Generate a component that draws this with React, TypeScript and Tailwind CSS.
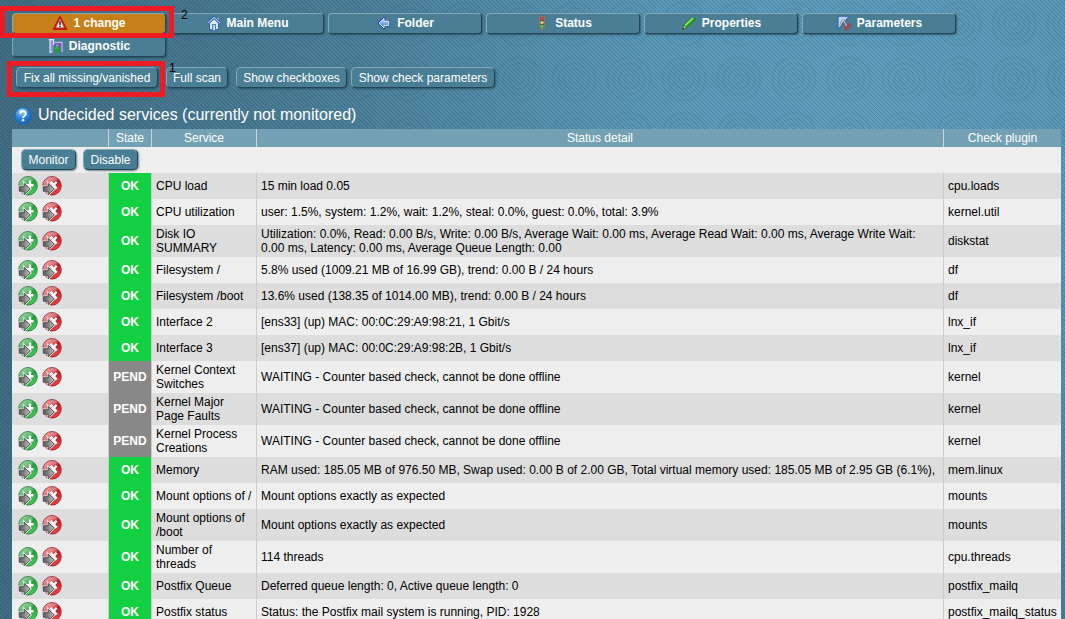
import React from "react";

type Row = { state: "OK" | "PEND"; service: string[]; detail: string[]; plugin: string };

const wait = "WAITING - Counter based check, cannot be done offline";

const rows: Row[] = [
  { state: "OK", service: ["CPU load"], detail: ["15 min load 0.05"], plugin: "cpu.loads" },
  { state: "OK", service: ["CPU utilization"], detail: ["user: 1.5%, system: 1.2%, wait: 1.2%, steal: 0.0%, guest: 0.0%, total: 3.9%"], plugin: "kernel.util" },
  {
    state: "OK",
    service: ["Disk IO", "SUMMARY"],
    detail: [
      "Utilization: 0.0%, Read: 0.00 B/s, Write: 0.00 B/s, Average Wait: 0.00 ms, Average Read Wait: 0.00 ms, Average Write Wait:",
      "0.00 ms, Latency: 0.00 ms, Average Queue Length: 0.00",
    ],
    plugin: "diskstat",
  },
  { state: "OK", service: ["Filesystem /"], detail: ["5.8% used (1009.21 MB of 16.99 GB), trend: 0.00 B / 24 hours"], plugin: "df" },
  { state: "OK", service: ["Filesystem /boot"], detail: ["13.6% used (138.35 of 1014.00 MB), trend: 0.00 B / 24 hours"], plugin: "df" },
  { state: "OK", service: ["Interface 2"], detail: ["[ens33] (up) MAC: 00:0C:29:A9:98:21, 1 Gbit/s"], plugin: "lnx_if" },
  { state: "OK", service: ["Interface 3"], detail: ["[ens37] (up) MAC: 00:0C:29:A9:98:2B, 1 Gbit/s"], plugin: "lnx_if" },
  { state: "PEND", service: ["Kernel Context", "Switches"], detail: [wait], plugin: "kernel" },
  { state: "PEND", service: ["Kernel Major", "Page Faults"], detail: [wait], plugin: "kernel" },
  { state: "PEND", service: ["Kernel Process", "Creations"], detail: [wait], plugin: "kernel" },
  { state: "OK", service: ["Memory"], detail: ["RAM used: 185.05 MB of 976.50 MB, Swap used: 0.00 B of 2.00 GB, Total virtual memory used: 185.05 MB of 2.95 GB (6.1%),"], plugin: "mem.linux" },
  { state: "OK", service: ["Mount options of /"], detail: ["Mount options exactly as expected"], plugin: "mounts" },
  { state: "OK", service: ["Mount options of", "/boot"], detail: ["Mount options exactly as expected"], plugin: "mounts" },
  { state: "OK", service: ["Number of", "threads"], detail: ["114 threads"], plugin: "cpu.threads" },
  { state: "OK", service: ["Postfix Queue"], detail: ["Deferred queue length: 0, Active queue length: 0"], plugin: "postfix_mailq" },
  { state: "OK", service: ["Postfix status"], detail: ["Status: the Postfix mail system is running, PID: 1928"], plugin: "postfix_mailq_status" },
];

function Backdrop() {
  return (
    <svg className="absolute inset-0" width="1065" height="619" aria-hidden="true">
      <defs>
        <radialGradient id="glow" gradientUnits="userSpaceOnUse" cx="860" cy="110" r="880">
          <stop offset="0" stopColor="#619fbe" />
          <stop offset="0.25" stopColor="#5b99b8" />
          <stop offset="0.6" stopColor="#4c7f98" />
          <stop offset="1" stopColor="#416c82" />
        </radialGradient>
        <pattern id="rings" width="55" height="55" x="-3.5" y="-3.5" patternUnits="userSpaceOnUse">
          <g fill="none" stroke="#21495d" strokeOpacity="0.1" strokeWidth="1.6">
            <circle cx="27.5" cy="27.5" r="5" />
            <circle cx="27.5" cy="27.5" r="10" />
            <circle cx="27.5" cy="27.5" r="15.5" />
            <circle cx="27.5" cy="27.5" r="21.5" />
          </g>
        </pattern>
        <pattern id="hatch" width="4" height="4" patternUnits="userSpaceOnUse">
          <path d="M-1-1 5 5M-1 3 1 5M3-1 5 1" stroke="#153c50" strokeOpacity="0.23" strokeWidth="1" />
        </pattern>
      </defs>
      <rect width="1065" height="619" fill="url(#glow)" />
      <rect width="1065" height="619" fill="url(#rings)" />
      <rect width="1065" height="619" fill="url(#hatch)" />
    </svg>
  );
}

function WarningIcon() {
  return (
    <svg width="16" height="16" viewBox="0 0 16 16">
      <path d="M8 1.5 14.6 14.3H1.4Z" fill="#d5281f" stroke="#b81d16" strokeWidth="1.4" strokeLinejoin="round" />
      <path d="M8 4.2 11.9 12.6H4.1Z" fill="#f6e9e6" />
      <path d="M7.2 6h1.6v4H7.2zM7.2 10.8h1.6v1.4H7.2z" fill="#4a3532" />
    </svg>
  );
}

function HomeIcon() {
  return (
    <svg width="16" height="16" viewBox="0 0 16 16">
      <path d="M3.5 8v6.5h9V8L8 3.5Z" fill="#dce9fa" stroke="#3264ae" />
      <path d="M11 2.5h1.8v4H11z" fill="#e7f0fb" stroke="#3264ae" strokeWidth="0.6" />
      <path d="M1.4 8.6 8 2.3l6.6 6.3" fill="none" stroke="#254f96" strokeWidth="2.6" />
      <path d="M1.6 8.4 8 2.3l6.4 6.1" fill="none" stroke="#a8ccf6" strokeWidth="1.3" />
      <path d="M6 9h4v6H6Z" fill="#4b80c5" />
      <path d="M7 10h2v5H7Z" fill="#b9d6f8" />
    </svg>
  );
}

function BackIcon() {
  return (
    <svg width="16" height="16" viewBox="0 0 16 16">
      <defs>
        <linearGradient id="arrow" x2="0" y2="1">
          <stop stopColor="#cce4ff" />
          <stop offset="0.55" stopColor="#6ca3f5" />
          <stop offset="1" stopColor="#2a61cf" />
        </linearGradient>
      </defs>
      <path d="M3 8.2 8 3.4v2.7h4.8v4.3H8V13Z" fill="#e3efff" stroke="#1f3ea2" strokeWidth="2.4" strokeLinejoin="round" />
      <path d="M3 8.2 8 3.4v2.7h4.8v4.3H8V13Z" fill="url(#arrow)" stroke="#e3efff" strokeWidth="1" />
    </svg>
  );
}

function TrafficIcon() {
  return (
    <svg width="16" height="16" viewBox="0 0 16 16">
      <path d="M5 .7h6v11.5l-2 3H7l-2-3Z" fill="#8b8b80" stroke="#656b66" strokeWidth="0.7" />
      <rect x="6.2" y="1.8" width="3.6" height="11.4" fill="#55584c" />
      <circle cx="8" cy="3.6" r="1.7" fill="#f03927" />
      <circle cx="8" cy="7.5" r="1.6" fill="#efd266" />
      <circle cx="8" cy="11.3" r="1.6" fill="#65c745" />
    </svg>
  );
}

function PencilIcon() {
  return (
    <svg width="16" height="16" viewBox="0 0 16 16">
      <path d="m1.5 14.5 1.7-4.6L11.8 2l2.7 1.8-8.7 9Z" fill="#24b311" stroke="#126319" strokeWidth="0.8" />
      <path d="m4 10.5 8.3-7.8" stroke="#a5f25e" strokeWidth="1.5" />
      <path d="m1.5 14.5 1.4-4 2.6 2.2Z" fill="#d5d4a7" stroke="#375d28" strokeWidth="0.6" />
      <path d="m1.2 14.8.8-2 1.2 1Z" fill="#17361c" />
    </svg>
  );
}

function ParametersIcon() {
  return (
    <svg width="16" height="16" viewBox="0 0 16 16">
      <path d="M2 1.2h11.3L2 14.5Z" fill="#94bdec" stroke="#2f5fa8" strokeWidth="0.9" />
      <path d="M3 2.2h8L3 11.6Z" fill="#bdd9f6" />
      <path d="m7 4.5-2.6 6M7 4.2l3.6 7M6.4 8.4l4 3.4" fill="none" stroke="#5b6873" strokeWidth="2" />
      <path d="m7 4.5-2.6 6M7 4.2l3.6 7" fill="none" stroke="#edf2f5" strokeWidth="0.9" />
      <circle cx="13" cy="10.5" r="1.5" fill="none" stroke="#b83a40" strokeWidth="1.3" />
      <circle cx="10.6" cy="13.6" r="1.5" fill="none" stroke="#b83a40" strokeWidth="1.3" />
    </svg>
  );
}

function DiagnosticIcon() {
  return (
    <svg width="16" height="16" viewBox="0 0 16 16">
      <path d="M2.2 2h3.2v12.3H2.2Z" fill="#8f8ee0" />
      <path d="M.8 1.6h5.4M2 2v12.3h2M5.6 2v5" fill="none" stroke="#e6e8fd" strokeWidth="1.1" />
      <path d="M7 5h7v9H7Z" fill="#6e5bb4" />
      <path d="M6.6 4.4h8M14 5v9" fill="none" stroke="#cfcaf1" />
      <path d="M8 6.5h2.5v3H8Z" fill="#9a86d6" />
      <circle cx="8.8" cy="11.6" r="3.4" fill="#249a3c" />
      <path d="M6.8 10.6q2-2 3.2 0" stroke="#66c66e" fill="none" />
    </svg>
  );
}

function HelpIcon() {
  return (
    <svg width="18" height="18" viewBox="0 0 18 18">
      <defs>
        <radialGradient id="help" cx="0.4" cy="0.2" r="0.85">
          <stop stopColor="#9cd4fb" />
          <stop offset="0.5" stopColor="#2f83d9" />
          <stop offset="1" stopColor="#0961be" />
        </radialGradient>
      </defs>
      <circle cx="9" cy="9" r="8.2" fill="url(#help)" stroke="#1663ad" strokeWidth="0.7" />
      <path d="M6.2 6.8C6 3.3 12 3.5 11.8 6.7c0 2-2.7 2-2.7 4.2" fill="none" stroke="#fff" strokeWidth="2" />
      <circle cx="9.1" cy="13.2" r="1.2" fill="#fff" />
    </svg>
  );
}

function ActionIcon({ kind }: { kind: "add" | "remove" }) {
  const add = kind === "add";
  return (
    <svg width="20" height="20" viewBox="0 0 20 20">
      <defs>
        <linearGradient id="green" x2="0.7" y2="1">
          <stop stopColor="#b6dfb9" />
          <stop offset="0.42" stopColor="#62b870" />
          <stop offset="0.55" stopColor="#219f38" />
          <stop offset="1" stopColor="#45cf5a" />
        </linearGradient>
        <linearGradient id="red" x2="0.7" y2="1">
          <stop stopColor="#f6bcbe" />
          <stop offset="0.42" stopColor="#da7276" />
          <stop offset="0.55" stopColor="#bd1620" />
          <stop offset="1" stopColor="#f04848" />
        </linearGradient>
        <linearGradient id="metal" x2="1" y2="0">
          <stop stopColor="#5a5a5a" />
          <stop offset="0.5" stopColor="#8a8a8a" />
          <stop offset="1" stopColor="#c4c4c4" />
        </linearGradient>
      </defs>
      <circle cx="10" cy="9.8" r="9.3" fill={add ? "url(#green)" : "url(#red)"} stroke={add ? "#237437" : "#912027"} strokeWidth="0.8" />
      <path d={add ? "M12 4.5v9.5M7 9.2h8.5" : "m8.5 5.8 6.2 6.8m0-6.8-6.2 6.8"} stroke="#fff" strokeWidth="2.4" />
      <path d="M1.3 10.7h4.9V7.3l6 5.7-6 5.7v-3.4H1.3Z" fill="none" stroke="#e9e9e9" strokeWidth="2.2" />
      <path d="M1.3 10.7h4.9V7.3l6 5.7-6 5.7v-3.4H1.3Z" fill="url(#metal)" stroke="#4a4a4a" strokeWidth="0.9" />
    </svg>
  );
}

const navItems = [
  { label: "1 change", icon: <WarningIcon /> },
  { label: "Main Menu", icon: <HomeIcon /> },
  { label: "Folder", icon: <BackIcon /> },
  { label: "Status", icon: <TrafficIcon /> },
  { label: "Properties", icon: <PencilIcon /> },
  { label: "Parameters", icon: <ParametersIcon /> },
  { label: "Diagnostic", icon: <DiagnosticIcon /> },
];

const bevel = "border border-t-[#85a9b8] border-l-[#85a9b8] border-r-[#234657] border-b-[#234657] shadow-[1px_1px_2px_#19384a99]";

function Button({ label, width }: { label: string; width: string }) {
  return (
    <button className={`flex h-[21px] shrink-0 items-center justify-center whitespace-nowrap rounded-[5px] bg-[#4a7e95] text-white ${bevel} ${width}`}>
      {label}
    </button>
  );
}

export default function App() {
  return (
    <div className="relative h-[619px] w-[1065px] overflow-hidden bg-[#4a7e98] font-['Liberation_Sans',Arial,sans-serif] text-[12px] leading-[14px] text-black">
      <Backdrop />
      <main className="relative flex flex-col pl-3 pt-[13px]">
        <nav className="flex h-[54px] flex-wrap content-start gap-x-1 gap-y-[2px]">
          {navItems.map((item, i) => (
            <button
              key={item.label}
              className={`flex h-[21px] w-[154px] items-center justify-center gap-[5px] rounded-[4px] pb-px font-bold text-white ${bevel} ${i === 0 ? "bg-[#c77f1a]" : "bg-[#4a7e95]"}`}
            >
              {item.icon}
              <span>{item.label}</span>
            </button>
          ))}
        </nav>
        <div className="flex h-[37px] items-start pl-1">
          <Button label="Fix all missing/vanished" width="mr-2 w-[142px]" />
          <Button label="Full scan" width="mr-[8px] w-[62px]" />
          <Button label="Show checkboxes" width="mr-1 w-[111px]" />
          <Button label="Show check parameters" width="w-[144px]" />
        </div>
        <h1 className="flex h-[25px] items-start gap-[6px] pl-[2px] text-[16px] leading-[20px] text-white">
          <span className="pt-[3px]"><HelpIcon /></span>
          <span className="pt-px">Undecided services (currently not monitored)</span>
        </h1>
        <section className="w-[1049px]">
          <div className="grid h-[18px] grid-cols-[96px_44px_104px_688px_117px] bg-[#73a1b3] text-center leading-[18px] text-white">
            <span />
            <span className="border-x border-[#c6d6dc]">State</span>
            <span>Service</span>
            <span className="border-x border-[#c6d6dc]">Status detail</span>
            <span>Check plugin</span>
          </div>
          <div className="flex h-[26px] gap-[7px] bg-[#eee] pl-[9px] pt-[2px]">
            <Button label="Monitor" width="w-[55px]" />
            <Button label="Disable" width="w-[55px]" />
          </div>
          {rows.map((row, i) => (
            <div
              key={row.service.join(" ")}
              className={`grid grid-cols-[96px_44px_104px_688px_117px] ${row.service.length > 1 ? "h-8" : "h-[26px]"} ${i % 2 ? "bg-[#eee]" : "bg-[#ddd]"}`}
            >
              <div className="flex items-center gap-1 pl-[6px]">
                <ActionIcon kind="add" />
                <ActionIcon kind="remove" />
              </div>
              <div className="border-x border-[#ccc]">
                <div className={`flex h-full items-center justify-center font-bold text-white ${row.state === "OK" ? "bg-[#13cf42]" : "bg-[#888]"}`}>{row.state}</div>
              </div>
              <div className="flex flex-col justify-center whitespace-nowrap pl-1">
                {row.service.map((line) => <span key={line}>{line}</span>)}
              </div>
              <div className="flex flex-col justify-center whitespace-nowrap border-x border-[#ccc] pl-1">
                {row.detail.map((line) => <span key={line}>{line}</span>)}
              </div>
              <div className="flex items-center pl-1">{row.plugin}</div>
            </div>
          ))}
        </section>
      </main>
      <div className="absolute left-0 top-[6px] h-8 w-[174px] border-[5px] border-[#ed1c24]" />
      <div className="absolute left-[7px] top-[61px] h-[36px] w-[158px] border-[5px] border-[#ed1c24]" />
      <span className="absolute left-[181px] top-[8px]">2</span>
      <span className="absolute left-[169px] top-[61px]">1</span>
    </div>
  );
}
